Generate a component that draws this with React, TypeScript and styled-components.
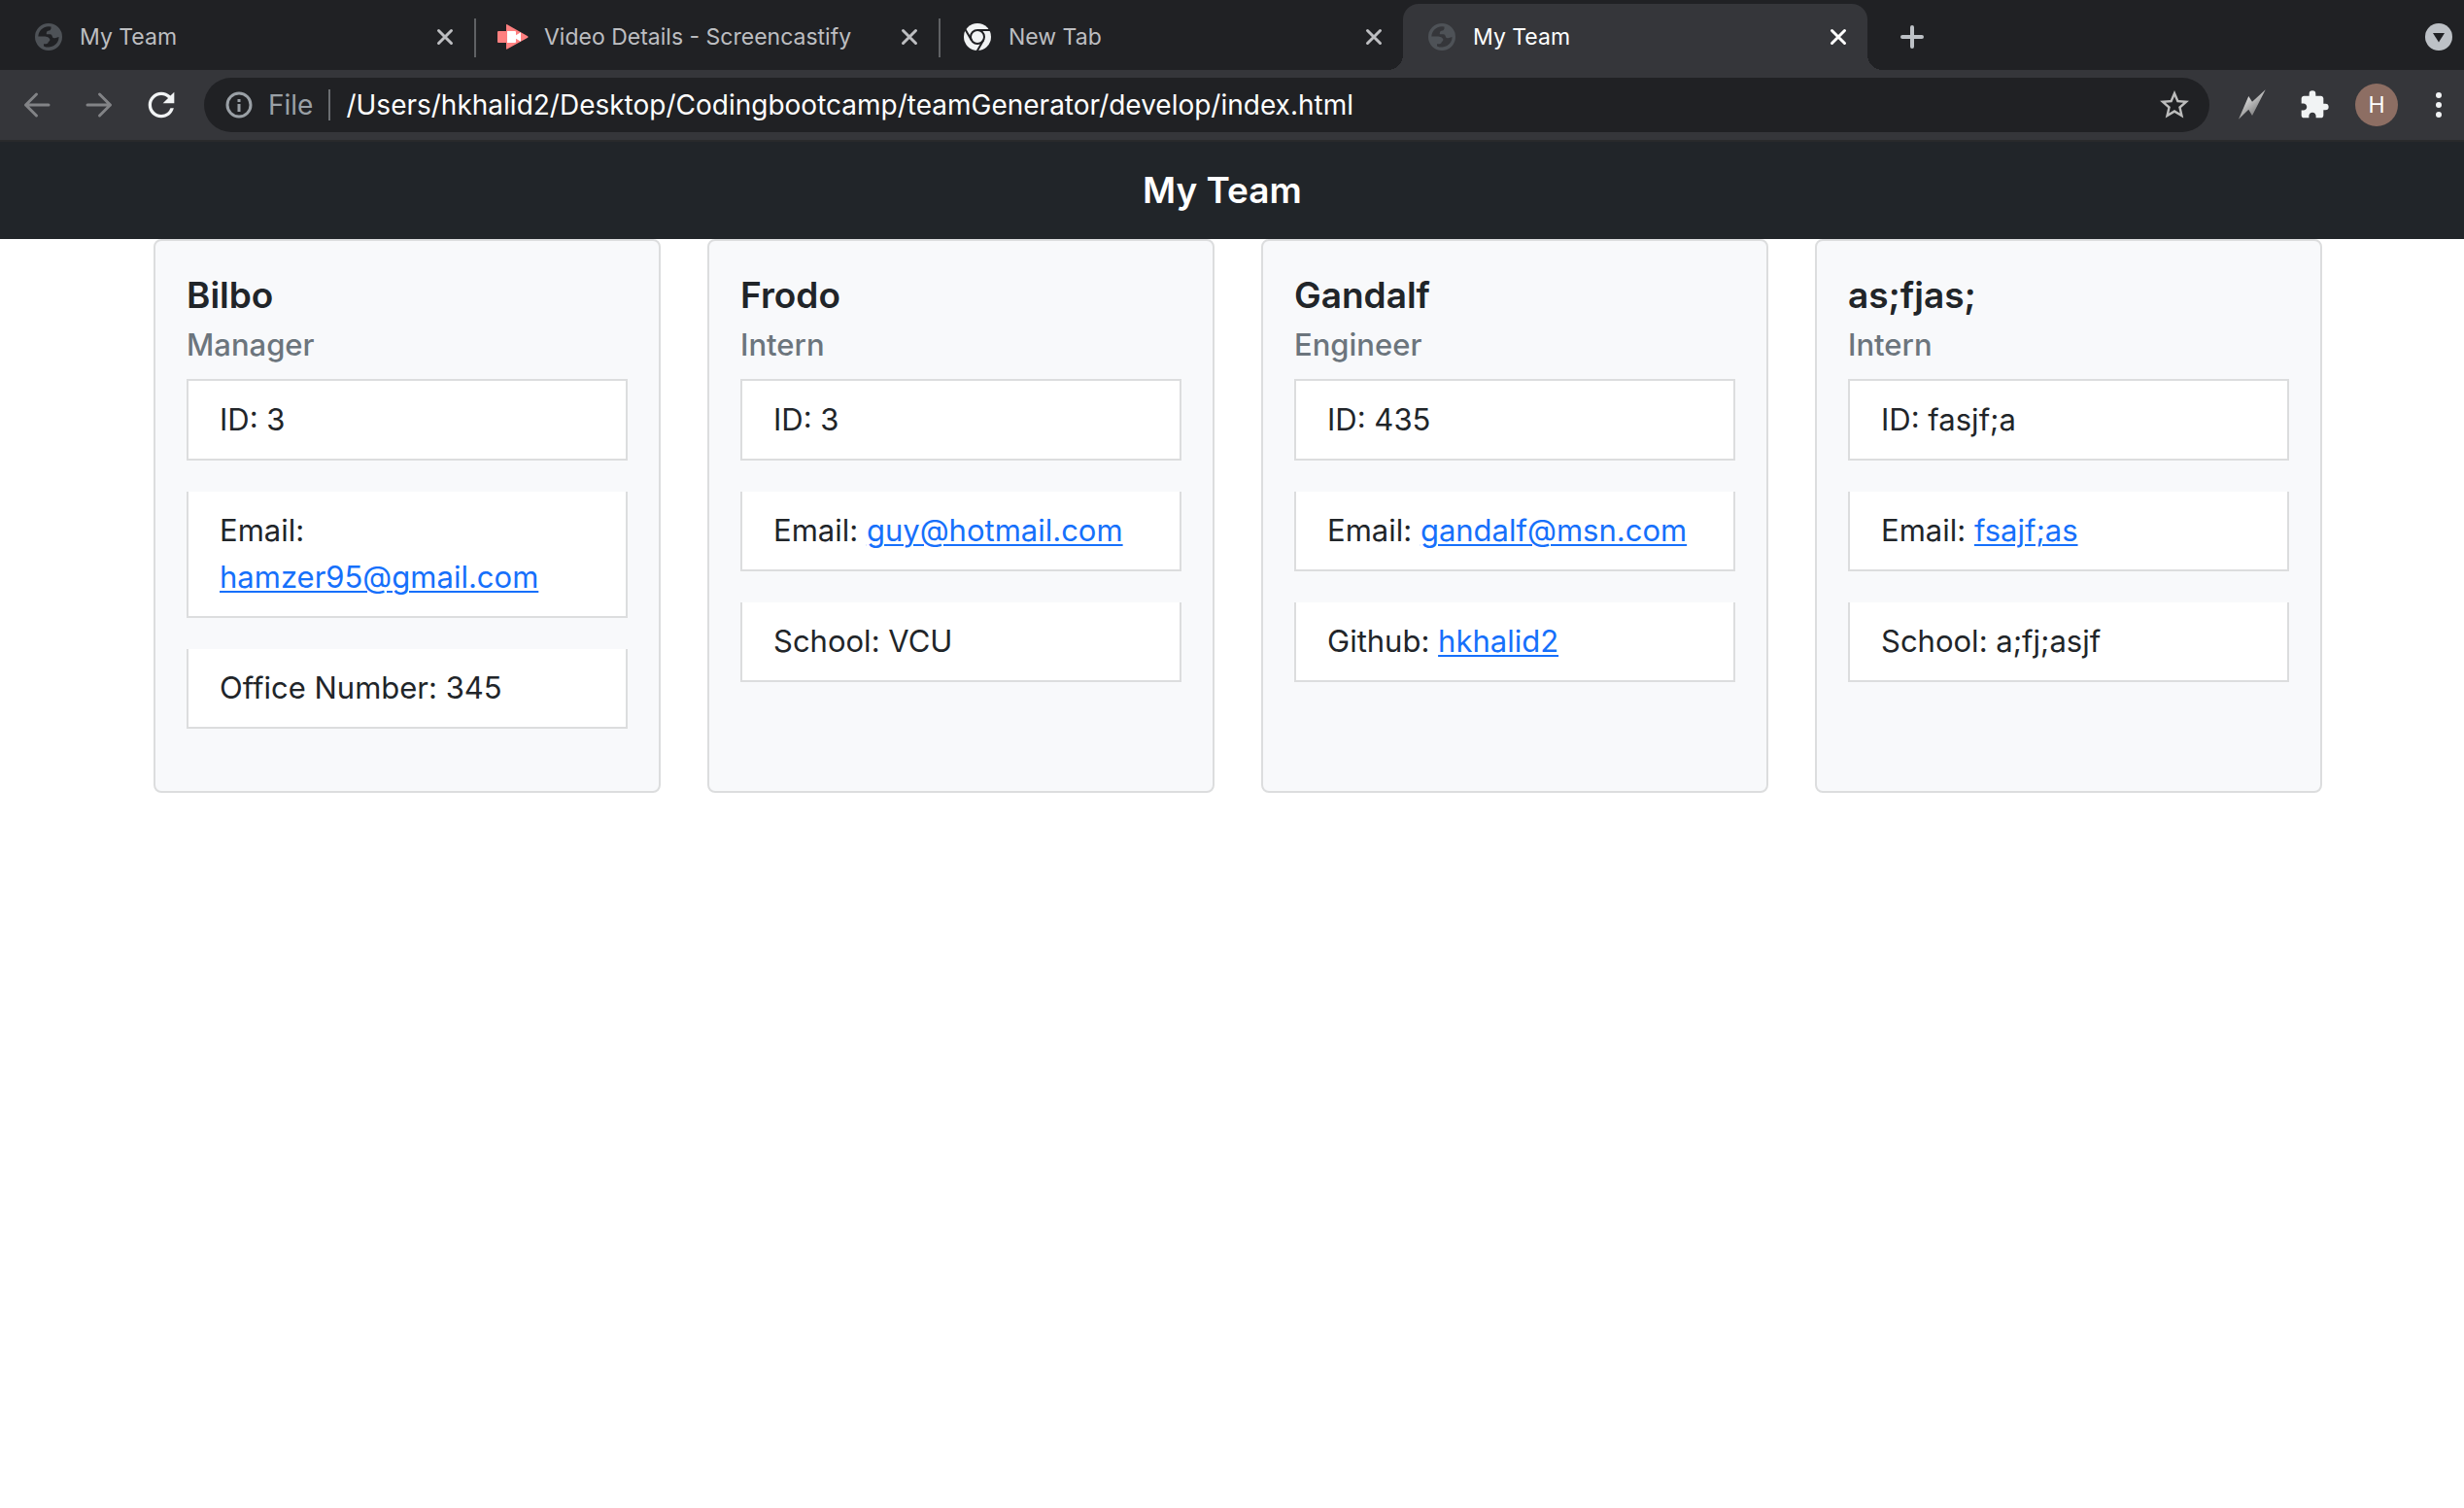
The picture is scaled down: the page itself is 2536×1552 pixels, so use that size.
import React from "react";
import styled, { createGlobalStyle, css } from "styled-components";
import { MdRefresh, MdStarBorder, MdExtension } from "react-icons/md";

const colors = {
  frame: "#202124",
  toolbar: "#35363a",
  toolbarEdge: "#292a2b",
  tabText: "#bdbec1",
  muted: "#9aa0a6",
  disabled: "#828386",
  bright: "#f1f3f4",
  dark: "#212529",
  secondary: "#6c757d",
  link: "#1670fb",
  light: "#f8f9fb",
  border: "#dcddde",
};

const GlobalStyle = createGlobalStyle`
  *, *::before, *::after { box-sizing: border-box; }
  body {
    margin: 0;
    background: #fff;
    color: ${colors.dark};
    font-family: Inter, Roboto, "Liberation Sans", sans-serif;
  }
  button, input { font: inherit; }
`;

/* ---------- browser window ---------- */

const TabStrip = styled.div`
  display: flex;
  align-items: stretch;
  height: 72px;
  padding: 4px 2px 0 10px;
  background: ${colors.frame};
`;

const TabList = styled.div`
  display: flex;
  flex: 0 1 1912px;
  min-width: 0;
`;

const Tab = styled.div<{ $active?: boolean; $divider?: boolean }>`
  position: relative;
  display: flex;
  flex: 1 1 0;
  min-width: 0;
  align-items: center;
  padding: 0 16px 0 26px;
  color: ${(p) => (p.$active ? "#fff" : colors.tabText)};

  ${(p) =>
    p.$divider &&
    css`
      &::after {
        content: "";
        position: absolute;
        right: -2px;
        top: 15px;
        width: 2px;
        height: 40px;
        background: #5f6164;
      }
    `}

  ${(p) =>
    p.$active &&
    css`
      background: ${colors.toolbar};
      border-radius: 16px 16px 0 0;

      &::before,
      &::after {
        content: "";
        position: absolute;
        bottom: 0;
        width: 16px;
        height: 16px;
      }
      &::before {
        right: 100%;
        background: radial-gradient(circle at 0 0, transparent 16px, ${colors.toolbar} 16px);
      }
      &::after {
        left: 100%;
        background: radial-gradient(circle at 100% 0, transparent 16px, ${colors.toolbar} 16px);
      }
    `}
`;

const TabSelect = styled.button`
  display: flex;
  flex: 1;
  min-width: 0;
  align-items: center;
  gap: 18px;
  padding: 0;
  border: 0;
  background: none;
  color: inherit;
  font-size: 23px;
  line-height: 32px;
  white-space: nowrap;
  text-align: left;
`;

const Favicon = styled.span`
  display: flex;
  flex: none;
  justify-content: center;
  width: 28px;

  svg { flex: none; }
`;

const CloseButton = styled.button`
  display: flex;
  flex: none;
  align-items: center;
  justify-content: center;
  width: 28px;
  height: 28px;
  padding: 0;
  border: 0;
  background: none;
  color: inherit;
`;

const IconButton = styled.button<{ $tone?: string; $push?: boolean }>`
  display: flex;
  flex: none;
  align-items: center;
  justify-content: center;
  width: 48px;
  height: 48px;
  padding: 0;
  border: 0;
  background: none;
  color: ${(p) => p.$tone ?? colors.bright};
  margin-left: ${(p) => (p.$push ? "auto" : "0")};
`;

const StripActions = styled.div`
  display: flex;
  flex: 1;
  align-items: center;
  padding-left: 22px;
`;

const Toolbar = styled.div`
  display: flex;
  align-items: center;
  gap: 20px;
  height: 74px;
  padding: 0 2px 0 14px;
  background: ${colors.toolbar};
  border-bottom: 2px solid ${colors.toolbarEdge};
`;

const ButtonGroup = styled.div`
  display: flex;
  flex: none;
  align-items: center;
  gap: 16px;
`;

const AddressBar = styled.div`
  display: flex;
  flex: 1;
  min-width: 0;
  align-items: center;
  height: 56px;
  padding: 0 12px 0 22px;
  border-radius: 28px;
  background: ${colors.frame};
  font-size: 28px;
  line-height: 40px;
`;

const Scheme = styled.span`
  display: flex;
  align-items: center;
  gap: 16px;
  color: ${colors.muted};

  &::after {
    content: "";
    width: 2px;
    height: 32px;
    background: #6b6e72;
  }
`;

const AddressInput = styled.input`
  flex: 1;
  min-width: 0;
  height: 40px;
  margin-left: 16px;
  padding: 0;
  border: 0;
  outline: 0;
  background: none;
  color: #fff;
`;

const Avatar = styled.button`
  width: 44px;
  height: 44px;
  margin: 0 2px;
  padding: 0;
  border: 0;
  border-radius: 50%;
  background: #8d6e63;
  color: #fff;
  font-size: 23px;
  line-height: 44px;
  text-align: center;
`;

/* ---------- team page ---------- */

const PageHeader = styled.header`
  padding: 20px 20px 20px 0;
  background: ${colors.dark};
  color: #fff;
  text-align: center;
`;

const PageTitle = styled.h1`
  margin: 0;
  font-size: 37px;
  font-weight: 600;
  line-height: 60px;
`;

const TeamGrid = styled.main`
  display: grid;
  grid-template-columns: repeat(4, minmax(0, 1fr));
  gap: 48px;
  padding: 0 146px 0 158px;
`;

const Card = styled.article`
  padding: 32px;
  border: 2px solid ${colors.border};
  border-radius: 8px;
  background: ${colors.light};
`;

const Name = styled.h2`
  margin: 0 0 8px;
  font-size: 37px;
  font-weight: 600;
  line-height: 48px;
`;

const Role = styled.h3`
  margin: 0 0 16px;
  color: ${colors.secondary};
  font-size: 31px;
  font-weight: 500;
  line-height: 38px;
`;

const Details = styled.ul`
  display: flex;
  flex-direction: column;
  gap: 32px;
  margin: 0 0 32px;
  padding: 0;
  list-style: none;
`;

const Detail = styled.li`
  padding: 16px 32px;
  border: 2px solid ${colors.border};
  background: #fff;
  font-size: 31px;
  line-height: 48px;

  & + & { border-top: 0; }
`;

const DetailLink = styled.a`
  color: ${colors.link};
  text-decoration: underline;
  text-decoration-thickness: 2px;
  text-underline-offset: 3px;
`;

/* ---------- icons ---------- */

const GlobeIcon = () => (
  <svg width="28" height="28" viewBox="0 0 28 28" aria-hidden="true">
    <path
      fill="#4e5257"
      fillRule="evenodd"
      d="M14 0a14 14 0 1 0 0 28a14 14 0 0 0 0-28z M3.3 13.5A10.7 10.7 0 0 1 16.5 3.6V5.5Q16 7.8 13.5 7.8Q11.8 8 11.8 10V11.3H15Q17.5 11 17.6 13Q18 15.7 20.5 15.3L24.6 14A10.7 10.7 0 0 1 9 23.4V21.2H11.5Q13.8 21 14 18.8Q15.8 18.4 15.2 16Q14 13.8 10.5 13.5z"
    />
  </svg>
);

const ChromeIcon = () => (
  <svg width="28" height="28" viewBox="0 0 28 28" aria-hidden="true">
    <circle cx="14" cy="14" r="14" fill={colors.bright} />
    <g fill="none" stroke={colors.frame} strokeWidth="2">
      <circle cx="14" cy="14" r="7" />
      <path d="M14 7H27" />
      <path d="M14 7H27" transform="rotate(120 14 14)" />
      <path d="M14 7H27" transform="rotate(240 14 14)" />
    </g>
  </svg>
);

const ScreencastIcon = () => (
  <svg width="32" height="28" viewBox="0 0 32 28" aria-hidden="true">
    <path fill="#ff8080" d="M1 8H9V1.6Q9 .6 10 1.2L31.2 13.2Q32 14 31.2 14.8L10 26.6Q9 27 9 26V20H1Q0 20 0 19V9Q0 8 1 8z" />
    <path fill="#fff" d="M10 8H18Q19 8 19 9V12.2L24 9.2V18.8L19 15.8V19Q19 20 18 20H10z" />
  </svg>
);

const CloseIcon = () => (
  <svg width="18" height="18" viewBox="0 0 18 18" aria-hidden="true">
    <path d="M2.5 2.5L15.5 15.5M15.5 2.5L2.5 15.5" stroke="currentColor" strokeWidth="3" strokeLinecap="round" />
  </svg>
);

const PlusIcon = () => (
  <svg width="24" height="24" viewBox="0 0 24 24" aria-hidden="true">
    <path d="M12 2V22M2 12H22" stroke="currentColor" strokeWidth="4" strokeLinecap="round" />
  </svg>
);

const TabSearchIcon = () => (
  <svg width="28" height="28" viewBox="0 0 28 28" aria-hidden="true">
    <circle cx="14" cy="14" r="14" fill="#bdc1c6" />
    <path d="M8 10H20L14 19.6z" fill={colors.frame} />
  </svg>
);

const BackIcon = () => (
  <svg width="28" height="28" viewBox="0 0 28 28" aria-hidden="true">
    <path d="M13.5 3L2.5 14L13.5 25M2.5 14H26" fill="none" stroke="currentColor" strokeWidth="3" strokeLinecap="round" strokeLinejoin="round" />
  </svg>
);

const ForwardIcon = () => (
  <svg width="28" height="28" viewBox="0 0 28 28" aria-hidden="true">
    <path d="M14.5 3L25.5 14L14.5 25M25.5 14H2" fill="none" stroke="currentColor" strokeWidth="3" strokeLinecap="round" strokeLinejoin="round" />
  </svg>
);

const InfoIcon = () => (
  <svg width="28" height="28" viewBox="0 0 28 28" aria-hidden="true">
    <circle cx="14" cy="14" r="12" fill="none" stroke="currentColor" strokeWidth="3" />
    <path d="M12.5 8H15.5V11H12.5zM12.5 13H15.5V21H12.5z" fill="currentColor" />
  </svg>
);

const BoltIcon = () => (
  <svg width="32" height="32" viewBox="0 0 32 32" aria-hidden="true">
    <defs>
      <linearGradient id="bolt" x1="0.25" y1="0.2" x2="0.7" y2="0.8">
        <stop offset="0" stopColor="#e4e4e4" />
        <stop offset="1" stopColor="#7e7e7e" />
      </linearGradient>
    </defs>
    <path fill="url(#bolt)" d="M2 30.7L12.3 7L16 12.7L29.7 .3L16 27L12.3 20.7z" />
  </svg>
);

const MenuIcon = () => (
  <svg width="8" height="28" viewBox="0 0 8 28" aria-hidden="true">
    <g fill="currentColor">
      <circle cx="4" cy="4" r="3" />
      <circle cx="4" cy="14" r="3" />
      <circle cx="4" cy="24" r="3" />
    </g>
  </svg>
);

/* ---------- data ---------- */

const tabs = [
  { title: "My Team", icon: <GlobeIcon />, divider: true },
  { title: "Video Details - Screencastify", icon: <ScreencastIcon />, divider: true },
  { title: "New Tab", icon: <ChromeIcon /> },
  { title: "My Team", icon: <GlobeIcon />, active: true },
];

interface Member {
  name: string;
  role: string;
  details: { label: string; value: string; href?: string }[];
}

const team: Member[] = [
  {
    name: "Bilbo",
    role: "Manager",
    details: [
      { label: "ID", value: "3" },
      { label: "Email", value: "hamzer95@gmail.com", href: "mailto:hamzer95@gmail.com" },
      { label: "Office Number", value: "345" },
    ],
  },
  {
    name: "Frodo",
    role: "Intern",
    details: [
      { label: "ID", value: "3" },
      { label: "Email", value: "guy@hotmail.com", href: "mailto:guy@hotmail.com" },
      { label: "School", value: "VCU" },
    ],
  },
  {
    name: "Gandalf",
    role: "Engineer",
    details: [
      { label: "ID", value: "435" },
      { label: "Email", value: "gandalf@msn.com", href: "mailto:gandalf@msn.com" },
      { label: "Github", value: "hkhalid2", href: "https://github.com/hkhalid2" },
    ],
  },
  {
    name: "as;fjas;",
    role: "Intern",
    details: [
      { label: "ID", value: "fasjf;a" },
      { label: "Email", value: "fsajf;as", href: "mailto:fsajf;as" },
      { label: "School", value: "a;fj;asjf" },
    ],
  },
];

export default function App() {
  return (
    <>
      <GlobalStyle />
      <TabStrip>
        <TabList>
          {tabs.map((tab, i) => (
            <Tab key={i} $active={tab.active} $divider={tab.divider}>
              <TabSelect type="button" aria-pressed={!!tab.active}>
                <Favicon>{tab.icon}</Favicon>
                {tab.title}
              </TabSelect>
              <CloseButton type="button" aria-label="Close tab">
                <CloseIcon />
              </CloseButton>
            </Tab>
          ))}
        </TabList>
        <StripActions>
          <IconButton type="button" aria-label="New tab" $tone="#bdc1c6">
            <PlusIcon />
          </IconButton>
          <IconButton type="button" aria-label="Search tabs" $push>
            <TabSearchIcon />
          </IconButton>
        </StripActions>
      </TabStrip>

      <Toolbar>
        <ButtonGroup>
          <IconButton type="button" aria-label="Back" $tone={colors.disabled}>
            <BackIcon />
          </IconButton>
          <IconButton type="button" aria-label="Forward" $tone={colors.disabled}>
            <ForwardIcon />
          </IconButton>
          <IconButton type="button" aria-label="Reload">
            <MdRefresh size={40} />
          </IconButton>
        </ButtonGroup>
        <AddressBar>
          <Scheme>
            <InfoIcon />
            File
          </Scheme>
          <AddressInput
            aria-label="Address"
            readOnly
            value="/Users/hkhalid2/Desktop/Codingbootcamp/teamGenerator/develop/index.html"
          />
          <IconButton type="button" aria-label="Bookmark this tab" $tone="#bdbdbd">
            <MdStarBorder size={36} />
          </IconButton>
        </AddressBar>
        <ButtonGroup>
          <IconButton type="button" aria-label="Extension">
            <BoltIcon />
          </IconButton>
          <IconButton type="button" aria-label="Extensions">
            <MdExtension size={32} />
          </IconButton>
          <Avatar type="button" aria-label="Profile H">H</Avatar>
          <IconButton type="button" aria-label="Menu">
            <MenuIcon />
          </IconButton>
        </ButtonGroup>
      </Toolbar>

      <PageHeader>
        <PageTitle>My Team</PageTitle>
      </PageHeader>
      <TeamGrid>
        {team.map((member) => (
          <Card key={member.name}>
            <Name>{member.name}</Name>
            <Role>{member.role}</Role>
            <Details>
              {member.details.map((d) => (
                <Detail key={d.label}>
                  {d.label}: {d.href ? <DetailLink href={d.href}>{d.value}</DetailLink> : d.value}
                </Detail>
              ))}
            </Details>
          </Card>
        ))}
      </TeamGrid>
    </>
  );
}
